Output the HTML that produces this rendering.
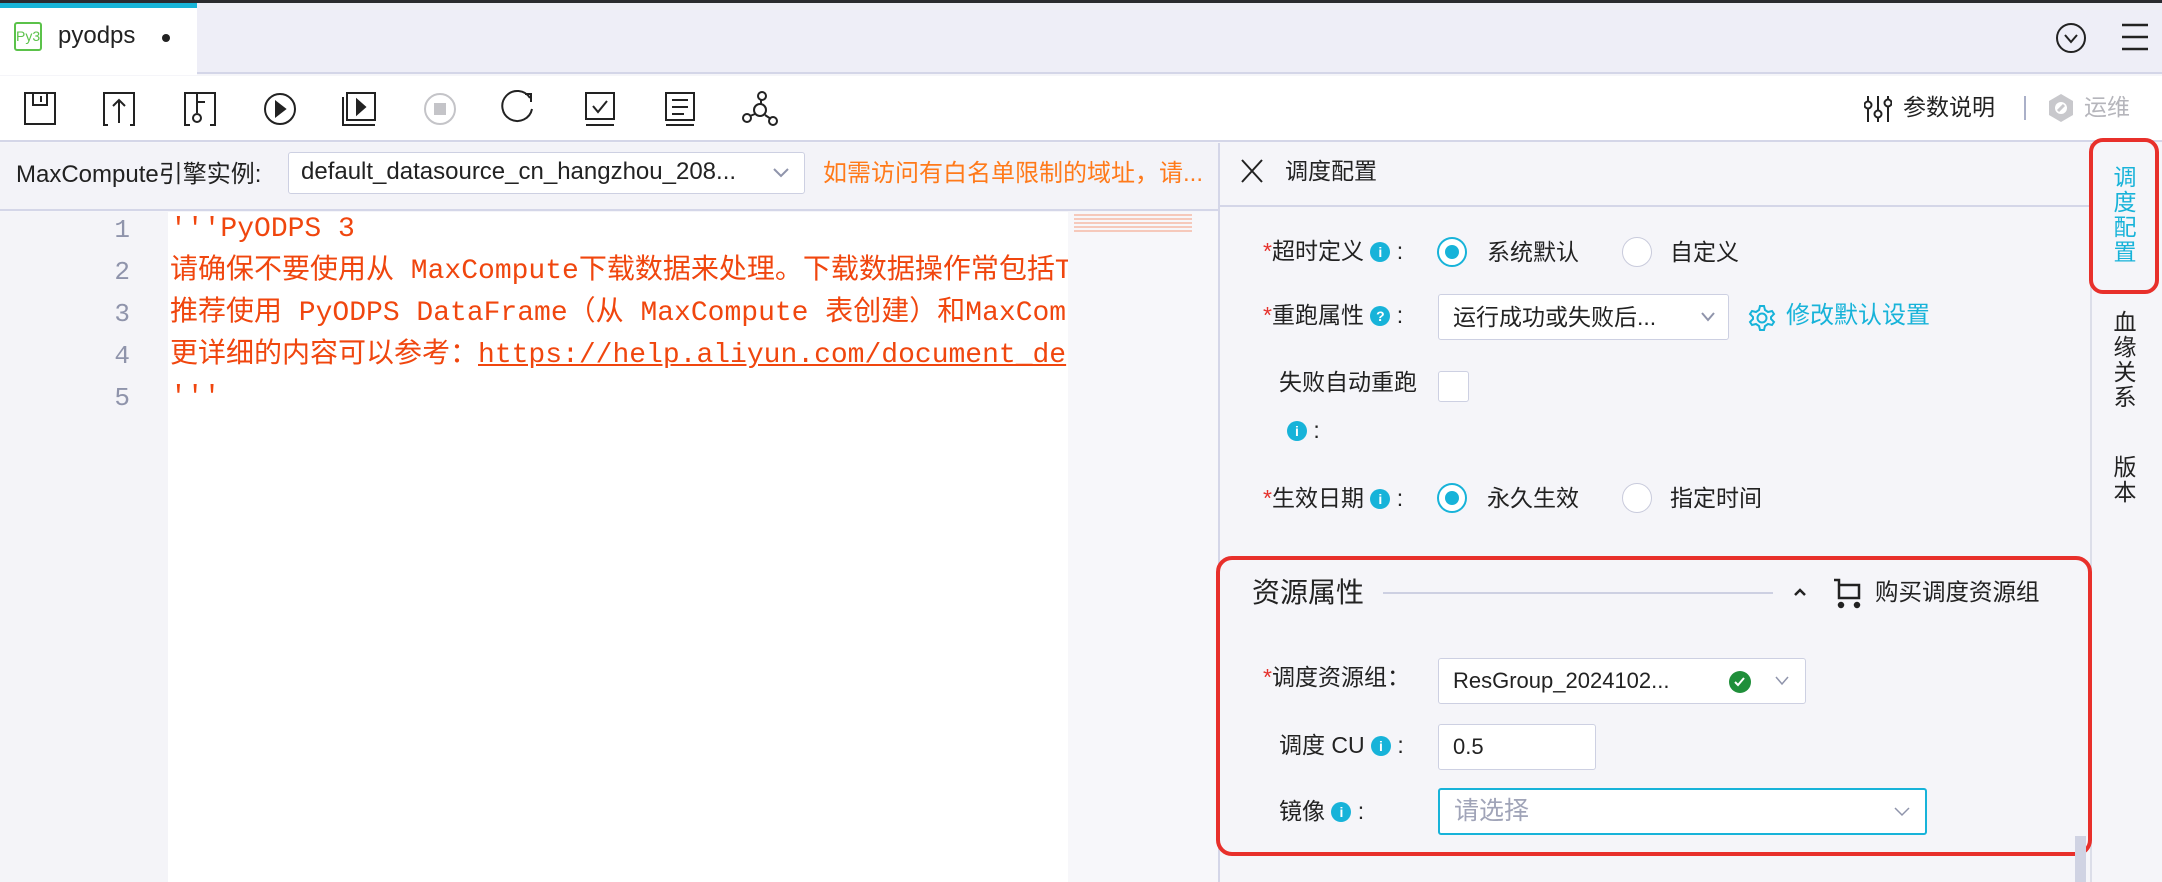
<!DOCTYPE html>
<html><head><meta charset="utf-8"><style>
*{margin:0;padding:0;box-sizing:border-box}
body{width:2162px;height:882px;overflow:hidden;background:#f5f5f9;font-family:"Liberation Sans","Noto Sans CJK SC",sans-serif;color:#222;position:relative}
.a{position:absolute}
.lbl{position:absolute;font-size:23px;color:#222;line-height:30px;white-space:nowrap}
.star{color:#e5322d}
.info{display:inline-block;width:20px;height:20px;border-radius:50%;background:#17b3d9;color:#fff;font-size:14px;line-height:20px;text-align:center;font-weight:bold;vertical-align:2px}
.radio{position:absolute;width:30px;height:30px;border-radius:50%;border:1.5px solid #c9cbdc;background:#fff}
.radio.on{border:2px solid #17b3d9}
.radio.on::after{content:"";position:absolute;left:6px;top:6px;width:14px;height:14px;border-radius:50%;background:#17b3d9}
.box{position:absolute;background:#fff;border:1.5px solid #cdd0e2;border-radius:3px;font-size:22px;line-height:28px;padding-left:14px;white-space:nowrap}
.code{position:absolute;left:170px;font-family:"Liberation Mono","Noto Sans CJK SC",monospace;font-size:28px;color:#f0460e;white-space:nowrap;line-height:42px}
.ln{position:absolute;left:96px;width:34px;text-align:right;font-family:"Liberation Mono",monospace;font-size:26px;color:#8f94ab;line-height:42px}
.vt{position:absolute;width:30px;font-size:23px;line-height:25px;text-align:center}
</style></head><body>
<div class="a" style="left:0;top:0;width:2162px;height:3px;background:#2a2b30"></div>
<div class="a" style="left:0;top:3px;width:2162px;height:71px;background:#eeeef7;border-bottom:2px solid #d4d6e8"></div>
<div class="a" style="left:0;top:3px;width:197px;height:72px;background:#fff"></div>
<div class="a" style="left:0;top:3px;width:197px;height:5px;background:#18b4d8"></div>
<div class="a" style="left:14px;top:22px;width:28px;height:29px;border:2px solid #5bc24a;border-radius:3px;color:#5bc24a;font-size:14px;line-height:25px;text-align:center">Py3</div>
<div class="a" style="left:58px;top:21px;font-size:24px;line-height:30px">pyodps</div>
<div class="a" style="left:162px;top:34px;width:8px;height:8px;border-radius:50%;background:#222"></div>
<svg class="a" style="left:2055px;top:22px" width="32" height="32" viewBox="0 0 32 32"><circle cx="16" cy="16" r="14" fill="none" stroke="#222" stroke-width="2"/><path d="M10 13l6 7 6-7" fill="none" stroke="#222" stroke-width="2"/></svg>
<svg class="a" style="left:2120px;top:22px" width="30" height="30"><path d="M2 3h26M2 15h26M2 27h26" stroke="#222" stroke-width="2.5"/></svg>
<div class="a" style="left:0;top:76px;width:2162px;height:66px;background:#fff;border-bottom:2px solid #d4d6e8"></div>
<svg class="a" style="left:0;top:88px" width="800" height="42" viewBox="0 0 800 42" fill="none" stroke="#222" stroke-width="2">
<rect x="25" y="5" width="30" height="31"/><path d="M33 5v12h14V5M41 8v6"/>
<path d="M108 37h-4V5h30v32h-4M119 35V12M113 18l6-6 6 6"/>
<path d="M190 37h-5V5h30v32h-5M197 5v20M197 14h8"/><circle cx="197" cy="30" r="4"/>
<circle cx="280" cy="21" r="15"/><path d="M276 14v14l9-7z" fill="#222"/>
<rect x="347" y="5" width="28" height="27"/><path d="M343 9v28h32"/><path d="M357 12v14l8-7z" fill="#222"/>
<circle cx="440" cy="21" r="15" stroke="#c4c4c8"/><rect x="434" y="15" width="12" height="12" fill="#c4c4c8" stroke="none"/>
<path d="M530 10a15 15 0 1 0 2 11M525 6h6v8"/>
<rect x="586" y="5" width="28" height="26"/><path d="M586 37h28M593 18l5 6 9-11"/>
<rect x="666" y="5" width="28" height="27"/><path d="M666 37h28M672 12h16M672 19h16M672 26h12"/>
<circle cx="762" cy="8" r="4"/><circle cx="760" cy="22" r="6"/><circle cx="747" cy="30" r="4"/><circle cx="773" cy="33" r="4"/><path d="M761 12v4M755 26l-5 2M765 27l6 4"/>
</svg>
<svg class="a" style="left:1864px;top:94px" width="28" height="30" fill="none" stroke="#222" stroke-width="2"><path d="M4 2v26M14 2v26M24 2v26"/><circle cx="4" cy="11" r="3.5" fill="#fff"/><circle cx="14" cy="20" r="3.5" fill="#fff"/><circle cx="24" cy="9" r="3.5" fill="#fff"/></svg>
<div class="a" style="left:1903px;top:92px;font-size:23px;line-height:30px">参数说明</div>
<div class="a" style="left:2024px;top:96px;width:2px;height:24px;background:#aab0c8"></div>
<svg class="a" style="left:2046px;top:92px" width="30" height="32"><path d="M15 2l12 7v14l-12 7-12-7V9z" fill="#c8c8cc"/><circle cx="15" cy="16" r="6" fill="#fff"/><path d="M12 19l6-6" stroke="#c8c8cc" stroke-width="3"/></svg>
<div class="a" style="left:2084px;top:92px;font-size:23px;line-height:30px;color:#b5b5bb">运维</div>
<div class="a" style="left:0;top:143px;width:1218px;height:68px;background:#f3f3f8;border-bottom:2px solid #d4d6e8"></div>
<div class="a" style="left:16px;top:160px;font-size:24px;line-height:30px;white-space:nowrap">MaxCompute引擎实例:</div>
<div class="box" style="left:288px;top:152px;width:517px;height:42px;padding-top:5px;font-size:24px;padding-left:12px;overflow:hidden">default_datasource_cn_hangzhou_208...</div>
<div class="a" style="left:770px;top:160px;width:30px;height:26px;background:#fff"></div>
<svg class="a" style="left:772px;top:166px" width="18" height="14"><path d="M2 3l7 7 7-7" fill="none" stroke="#8f94ab" stroke-width="2"/></svg>
<div class="a" style="left:823px;top:159px;font-size:24px;line-height:30px;color:#ff7a1a;white-space:nowrap;width:390px;overflow:hidden">如需访问有白名单限制的域址，请...</div>
<div class="a" style="left:0;top:212px;width:168px;height:670px;background:#f4f4f8"></div>
<div class="a" style="left:168px;top:212px;width:900px;height:670px;background:#fff"></div>
<div class="a" style="left:1068px;top:212px;width:150px;height:670px;background:#f7f7fa"></div>
<div class="a" style="left:1074px;top:214px;width:118px;height:18px;background:repeating-linear-gradient(#f6b5a0 0 2px,transparent 2px 4px);opacity:.7"></div>
<div class="a" style="left:1218px;top:143px;width:2px;height:739px;background:#d4d6e8"></div>
<div class="ln" style="top:209px">1</div><div class="ln" style="top:251px">2</div><div class="ln" style="top:293px">3</div><div class="ln" style="top:335px">4</div><div class="ln" style="top:377px">5</div>
<div class="a" style="left:168px;top:212px;width:900px;height:240px;overflow:hidden">
<div class="code" style="left:2px;top:-3px">'''PyODPS 3</div>
<div class="code" style="left:2px;top:39px">请确保不要使用从 MaxCompute下载数据来处理。下载数据操作常包括T</div>
<div class="code" style="left:2px;top:81px">推荐使用 PyODPS DataFrame（从 MaxCompute 表创建）和MaxCom</div>
<div class="code" style="left:2px;top:123px">更详细的内容可以参考：<span style="text-decoration:underline">https://help.aliyun.com/document_de</span></div>
<div class="code" style="left:2px;top:165px">'''</div>
</div>
<div class="a" style="left:1220px;top:143px;width:870px;height:64px;border-bottom:2px solid #d4d6e8"></div>
<svg class="a" style="left:1240px;top:158px" width="24" height="26"><path d="M2 2l20 22M22 2L2 24" stroke="#222" stroke-width="2"/></svg>
<div class="a" style="left:1285px;top:156px;font-size:23px;line-height:30px">调度配置</div>
<div class="a" style="left:2090px;top:143px;width:2px;height:739px;background:#dcdee9"></div>
<div class="lbl" style="left:1263px;top:236px"><span class="star">*</span>超时定义 <span class="info">i</span> :</div>
<div class="radio on" style="left:1437px;top:237px"></div><div class="lbl" style="left:1487px;top:237px">系统默认</div>
<div class="radio" style="left:1622px;top:237px"></div><div class="lbl" style="left:1670px;top:237px">自定义</div>
<div class="lbl" style="left:1263px;top:300px"><span class="star">*</span>重跑属性 <span class="info">?</span> :</div>
<div class="box" style="left:1438px;top:294px;width:291px;height:46px;padding-top:8px;font-size:23px">运行成功或失败后...</div>
<div class="a" style="left:1695px;top:305px;width:26px;height:26px;background:#fff"></div>
<svg class="a" style="left:1700px;top:310px" width="16" height="14"><path d="M2 3l6 7 6-7" fill="none" stroke="#8f94ab" stroke-width="2"/></svg>
<svg class="a" style="left:1748px;top:304px" width="28" height="28" fill="none" stroke="#17b3d9" stroke-width="2"><circle cx="14" cy="14" r="4.5"/><path d="M12 2h4l1 4 3 2 4-1 2 3-3 3v2l3 3-2 3-4-1-3 2-1 4h-4l-1-4-3-2-4 1-2-3 3-3v-2l-3-3 2-3 4 1 3-2z"/></svg>
<div class="a" style="left:1786px;top:301px;font-size:24px;line-height:30px;color:#17b3d9">修改默认设置</div>
<div class="lbl" style="left:1279px;top:367px">失败自动重跑</div>
<div class="a" style="left:1438px;top:371px;width:31px;height:31px;background:#fff;border:1.5px solid #cdd0e2;border-radius:3px"></div>
<div class="lbl" style="left:1287px;top:415px"><span class="info">i</span> :</div>
<div class="lbl" style="left:1263px;top:483px"><span class="star">*</span>生效日期 <span class="info">i</span> :</div>
<div class="radio on" style="left:1437px;top:483px"></div><div class="lbl" style="left:1487px;top:483px">永久生效</div>
<div class="radio" style="left:1622px;top:483px"></div><div class="lbl" style="left:1670px;top:483px">指定时间</div>
<div class="a" style="left:1216px;top:556px;width:876px;height:300px;border:4px solid #e8302b;border-radius:16px"></div>
<div class="a" style="left:1252px;top:574px;font-size:28px;line-height:38px">资源属性</div>
<div class="a" style="left:1383px;top:592px;width:390px;height:2px;background:#cdd0e2"></div>
<svg class="a" style="left:1792px;top:586px" width="16" height="12"><path d="M3 9l5-5 5 5" fill="none" stroke="#222" stroke-width="2.5"/></svg>
<svg class="a" style="left:1832px;top:577px" width="32" height="32" fill="none" stroke="#222" stroke-width="2.5"><path d="M2 3h5v18h20V8H7"/><circle cx="9" cy="28" r="2" fill="#222"/><circle cx="25" cy="28" r="2" fill="#222"/></svg>
<div class="a" style="left:1875px;top:577px;font-size:23.5px;line-height:30px">购买调度资源组</div>
<div class="lbl" style="left:1263px;top:662px"><span class="star">*</span>调度资源组：</div>
<div class="box" style="left:1438px;top:658px;width:368px;height:46px;padding-top:8px">ResGroup_2024102...</div>
<div class="a" style="left:1729px;top:671px;width:22px;height:22px;border-radius:50%;background:#1f8f3a"></div>
<svg class="a" style="left:1733px;top:675px" width="14" height="14"><path d="M2 7l3 3 6-7" fill="none" stroke="#fff" stroke-width="2"/></svg>
<svg class="a" style="left:1774px;top:675px" width="16" height="12"><path d="M2 2l6 7 6-7" fill="none" stroke="#8f94ab" stroke-width="1.5"/></svg>
<div class="lbl" style="left:1279px;top:730px">调度 CU <span class="info">i</span> :</div>
<div class="box" style="left:1438px;top:724px;width:158px;height:46px;padding-top:8px">0.5</div>
<div class="lbl" style="left:1279px;top:796px">镜像 <span class="info">i</span> :</div>
<div class="box" style="left:1438px;top:788px;width:489px;height:47px;padding-top:7px;border:2px solid #17b3d9;color:#a0a4b8;font-size:25px">请选择</div>
<svg class="a" style="left:1893px;top:806px" width="18" height="12"><path d="M2 2l7 7 7-7" fill="none" stroke="#8f94ab" stroke-width="1.5"/></svg>
<div class="a" style="left:2075px;top:836px;width:11px;height:46px;background:#d0d3e3"></div>
<div class="a" style="left:2092px;top:143px;width:70px;height:739px;background:#f5f5f9"></div>
<div class="a" style="left:2089px;top:138px;width:70px;height:156px;border:4px solid #e8302b;border-radius:14px"></div>
<div class="vt" style="left:2110px;top:165px;color:#17b3d9">调度配置</div>
<div class="vt" style="left:2110px;top:310px">血缘关系</div>
<div class="vt" style="left:2110px;top:455px">版本</div>
</body></html>
